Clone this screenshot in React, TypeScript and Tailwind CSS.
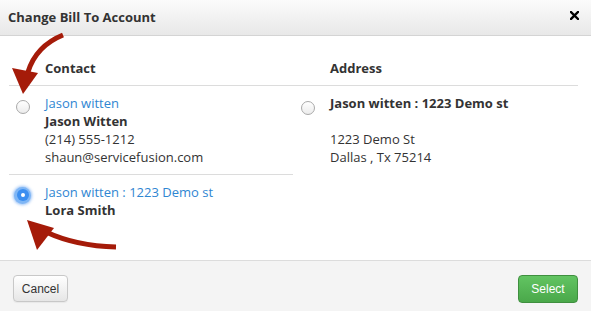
import React from "react";

function Radio({ checked }: { checked?: boolean }) {
  if (checked) {
    return (
      <span className="flex h-[17px] w-[17px] items-center justify-center rounded-full bg-[#7fb6f5] shadow-[0_0_3px_1px_rgba(80,150,240,0.6)]">
        <span className="flex h-[12px] w-[12px] items-center justify-center rounded-full bg-[#3b8ef0]">
          <span className="h-[4px] w-[4px] rounded-full bg-white" />
        </span>
      </span>
    );
  }
  return (
    <span className="block h-[14px] w-[14px] rounded-full border border-[#a9a9a9] bg-gradient-to-b from-white to-[#ececec]" />
  );
}

export default function App() {
  return (
    <div
      className="relative h-[311px] w-[591px] overflow-hidden bg-white text-[13px] text-[#333]"
      style={{ fontFamily: '"Open Sans", sans-serif' }}
    >
      {/* Header */}
      <div className="flex h-[36px] items-center justify-between border-b border-[#d4d4d4] bg-gradient-to-b from-[#fbfbfb] to-[#e8e8e8] pl-[8px] pr-[12px]">
        <h1 className="text-[13px] font-bold text-[#333]">Change Bill To Account</h1>
        <svg width="9" height="9" viewBox="0 0 9 9" className="mt-[-4px]">
          <path d="M1 1L8 8M8 1L1 8" stroke="#000" strokeWidth="2.4" strokeLinecap="square" />
        </svg>
      </div>

      {/* Body */}
      <div className="px-[9px] pt-[23px]">
        <div className="grid grid-cols-[284px_285px]">
          <div className="border-b border-[#dcdcdc] pb-[6px] pl-[36px] font-bold">Contact</div>
          <div className="border-b border-[#dcdcdc] pb-[6px] pl-[37px] font-bold">Address</div>

          <div className="flex border-b border-[#dcdcdc] pb-[8px] pt-[8px] leading-[18px]">
            <div className="w-[36px] pl-[7px] pt-[6px]">
              <Radio />
            </div>
            <div>
              <div className="text-[#2f86d2]">Jason witten</div>
              <div className="font-bold">Jason Witten</div>
              <div>(214) 555-1212</div>
              <div>shaun@servicefusion.com</div>
            </div>
          </div>
          <div className="flex pt-[8px] leading-[18px]">
            <div className="w-[37px] pl-[8px] pt-[7px]">
              <Radio />
            </div>
            <div>
              <div className="font-bold">Jason witten : 1223 Demo st</div>
              <div className="h-[18px]" />
              <div>1223 Demo St</div>
              <div>Dallas , Tx 75214</div>
            </div>
          </div>

          <div className="flex pt-[8px] leading-[18px]">
            <div className="w-[36px] pl-[5px] pt-[4px]">
              <Radio checked />
            </div>
            <div>
              <div className="text-[#2f86d2]">Jason witten : 1223 Demo st</div>
              <div className="font-bold">Lora Smith</div>
            </div>
          </div>
          <div />
        </div>
      </div>

      {/* Footer */}
      <div
        className="absolute bottom-0 left-0 right-0 flex h-[51px] items-start justify-between border-t border-[#dcdcdc] bg-[#f4f4f4] px-[13px] pt-[14px] text-[12px]"
        style={{ fontFamily: '"Liberation Sans", Arial, sans-serif' }}
      >
        <button className="h-[27px] w-[55px] rounded-[4px] border border-[#c8c8c8] bg-gradient-to-b from-white to-[#e6e6e6] text-[#333] shadow-[0_1px_1px_rgba(0,0,0,0.05)]">
          Cancel
        </button>
        <button className="h-[28px] w-[60px] rounded-[4px] border border-[#3f8f3f] bg-gradient-to-b from-[#62c462] to-[#4aa84a] text-white">
          Select
        </button>
      </div>

      {/* Annotation arrows */}
      <svg className="pointer-events-none absolute inset-0" width="591" height="311" viewBox="0 0 591 311">
        <path d="M63 35 Q36 46 28 72" stroke="#a51b09" strokeWidth="5" fill="none" />
        <polygon points="12,68 38,73 23,94" fill="#a51b09" />
        <path d="M116 247 Q76 246 46 232" stroke="#a51b09" strokeWidth="5" fill="none" />
        <polygon points="27,220 54,228 37,250" fill="#a51b09" />
      </svg>
    </div>
  );
}
